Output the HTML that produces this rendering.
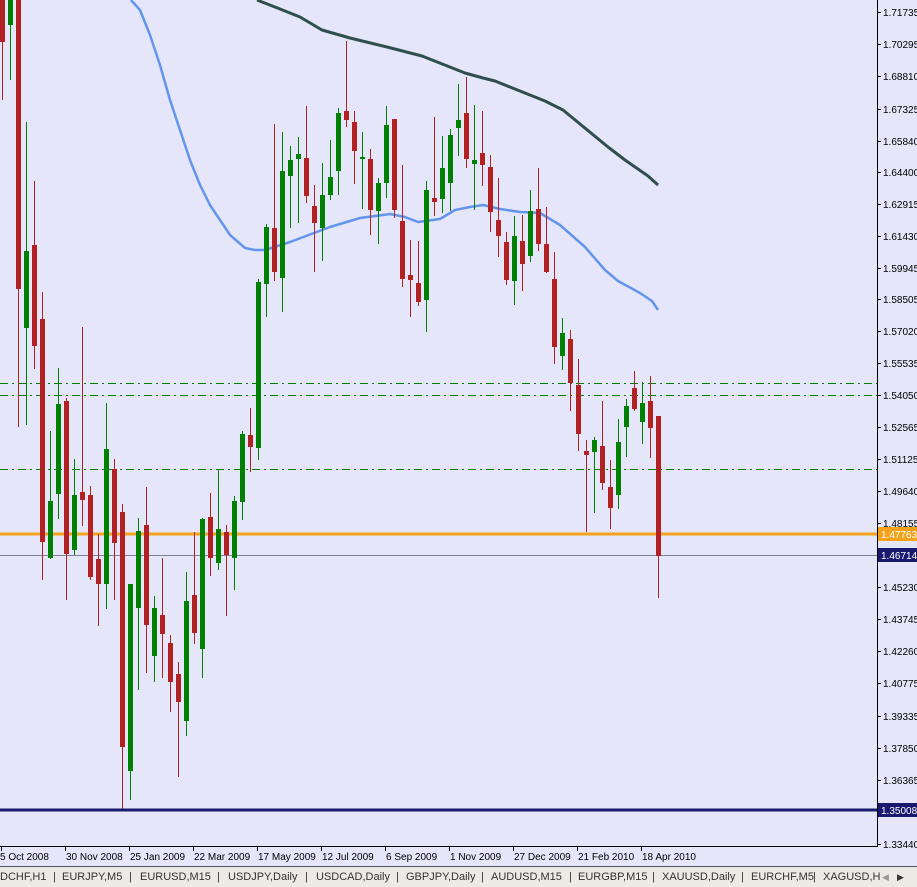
<!DOCTYPE html>
<html><head><meta charset="utf-8"><style>
html,body{margin:0;padding:0;width:917px;height:886px;overflow:hidden;background:#e6e6fa;font-family:"Liberation Sans",sans-serif}
svg{position:absolute;left:0;top:0}
#tabs{position:absolute;left:0;top:866px;width:917px;height:20px;background:#eceae4;border-top:1px solid #555;font-size:11px;color:#333}
#tabs span{position:absolute;top:4px;white-space:nowrap}
</style></head><body>
<svg id="c" width="917" height="866" xmlns="http://www.w3.org/2000/svg"></svg>
<div id="tabs">
<span style="left:0">DCHF,H1</span><span style="left:53px">|</span>
<span style="left:62px">EURJPY,M5</span><span style="left:129px">|</span>
<span style="left:140px">EURUSD,M15</span><span style="left:217px">|</span>
<span style="left:228px">USDJPY,Daily</span><span style="left:305px">|</span>
<span style="left:316px">USDCAD,Daily</span><span style="left:396px">|</span>
<span style="left:406px">GBPJPY,Daily</span><span style="left:481px">|</span>
<span style="left:491px">AUDUSD,M15</span><span style="left:569px">|</span>
<span style="left:578px">EURGBP,M15</span><span style="left:652px">|</span>
<span style="left:662px">XAUUSD,Daily</span><span style="left:741px">|</span>
<span style="left:751px">EURCHF,M5</span><span style="left:813px">|</span>
<span style="left:823px">XAGUSD,H</span>
<span style="left:882px;color:#999;font-size:9px;top:5px">◀</span><span style="left:897px;font-size:9px;top:5px">▶</span>
</div>
<script>
var C=[
[0,0,42,0,100],[1,25,0,0,80],[0,0,289,0,427],[1,328,251,122,425],[0,245,346,181,369],[0,319,542,292,580],
[1,558,501,431,559],[1,494,404,368,519],[0,401,554,398,600],[1,550,495,459,555],[0,492,500,327,526],[0,495,577,486,580],
[0,559,584,534,626],[1,584,449,403,609],[0,469,543,459,600],[0,512,747,504,809],[1,771,584,584,800],[1,608,531,518,690],
[0,525,625,487,673],[1,656,608,596,682],[0,615,634,558,678],[0,643,682,635,712],[0,674,702,662,777],[1,721,601,572,736],
[0,595,633,532,644],[1,649,519,518,678],[0,517,558,493,576],[1,563,529,469,570],[0,532,555,525,616],[1,558,501,496,590],
[1,502,434,431,520],[0,435,447,408,472],[1,448,282,279,460],[1,284,227,224,317],[0,228,272,124,281],[1,278,171,132,312],
[1,176,160,146,228],[1,159,154,137,223],[0,158,196,106,203],[0,206,223,185,272],[1,228,195,163,261],[1,195,177,140,200],
[1,171,113,108,195],[0,111,120,41,127],[0,122,151,111,184],[1,159,157,132,209],[0,159,210,149,235],[1,211,183,178,244],
[1,183,125,106,198],[0,119,210,119,218],[0,221,279,165,287],[0,275,280,240,317],[0,283,302,241,306],[1,300,190,181,332],
[0,198,202,117,216],[1,199,168,136,213],[1,183,135,129,211],[1,128,120,84,156],[0,113,159,77,168],[1,164,160,105,210],
[0,153,165,111,186],[0,167,212,155,232],[0,220,236,178,257],[0,242,280,232,285],[1,281,236,216,305],[0,241,264,215,291],
[1,256,211,190,262],[0,209,244,168,251],[0,244,272,207,273],[0,279,347,252,364],[1,356,333,318,370],[0,339,383,330,411],
[0,385,434,359,451],[0,451,455,440,532],[1,452,440,437,513],[0,446,483,401,490],[0,487,508,460,529],[1,495,442,419,509],
[1,427,406,399,457],[0,388,409,371,411],[1,422,403,382,444],[0,401,428,376,458],[0,416,556,416,598]];
var s='';
function L(x1,y1,x2,y2,c,w,d){s+='<line x1="'+x1+'" y1="'+y1+'" x2="'+x2+'" y2="'+y2+'" stroke="'+c+'" stroke-width="'+w+'"'+(d?' stroke-dasharray="'+d+'"':'')+'/>';}
function T(x,y,t,c){s+='<text x="'+x+'" y="'+y+'" font-size="10" fill="'+(c||'#000')+'" font-family="Liberation Sans,sans-serif">'+t+'</text>';}
[383,395,469].forEach(function(y){L(0,y+.5,877,y+.5,'#008000',1,'8,4,2,4');});
L(0,534,877,534,'#f4a21c',3);
L(0,555.5,877,555.5,'#7f8398',1);
L(0,810,877,810,'#191970',3);
s+='<polyline fill="none" stroke="#2f4f4f" stroke-width="3" stroke-linejoin="round" points="257,0 280,9 300,17 322,30 350,38 387,47 422,56 465,73 483,78 495,81 530,95 545,101 563,110 580,124 608,147 625,160 648,176 658,185"/>';
s+='<polyline fill="none" stroke="#6495ed" stroke-width="2.5" stroke-linejoin="round" points="131,0 140,10 150,35 160,65 170,100 180,130 190,160 200,185 210,205 220,220 230,235 245,248 255,250 265,250 290,242 330,227 360,218 390,214 405,217 418,222 440,219 455,210 470,207 483,205 500,209 520,212 540,213 560,225 585,247 605,270 618,281 640,293 652,301 658,310"/>';
C.forEach(function(c,i){var x=2+8*i,col=c[0]?'#008000':'#b22222';
L(x+.5,c[3],x+.5,c[4],col,1);
var t=Math.min(c[1],c[2]),b=Math.max(c[1],c[2]);if(b-t<2)b=t+2;
s+='<rect x="'+(x-2)+'" y="'+t+'" width="5" height="'+(b-t)+'" fill="'+col+'"/>';});
L(877.5,0,877.5,847,'#000',1);L(0,846.5,877,846.5,'#000',1);
var P=[[12,'1.71735'],[44,'1.70295'],[76,'1.68810'],[109,'1.67325'],[141,'1.65840'],[172,'1.64400'],[204,'1.62915'],[236,'1.61430'],[268,'1.59945'],[299,'1.58505'],[331,'1.57020'],[363,'1.55535'],[395,'1.54050'],[427,'1.52565'],[459,'1.51125'],[491,'1.49640'],[523,'1.48155'],[587,'1.45230'],[619,'1.43745'],[651,'1.42260'],[683,'1.40775'],[716,'1.39335'],[748,'1.37850'],[780,'1.36365'],[844,'1.33440']];
P.forEach(function(p){L(877,p[0]+.5,881,p[0]+.5,'#000',1);T(883,p[0]+4,p[1]);});
s+='<rect x="878" y="527" width="39" height="14" fill="#f4a21c"/>';T(881,538,'1.47763','#fff');
s+='<rect x="878" y="548" width="39" height="14" fill="#191970"/>';T(881,559,'1.46714','#fff');
s+='<rect x="878" y="803" width="39" height="14" fill="#191970"/>';T(881,814,'1.35008','#fff');
var D=['5 Oct 2008','30 Nov 2008','25 Jan 2009','22 Mar 2009','17 May 2009','12 Jul 2009','6 Sep 2009','1 Nov 2009','27 Dec 2009','21 Feb 2010','18 Apr 2010'];
D.forEach(function(d,i){var x=1+64*i;L(x+.5,846,x+.5,851,'#000',1);T(i==0?0:x+1,860,d);});
document.getElementById('c').innerHTML=s;
</script>
</body></html>
